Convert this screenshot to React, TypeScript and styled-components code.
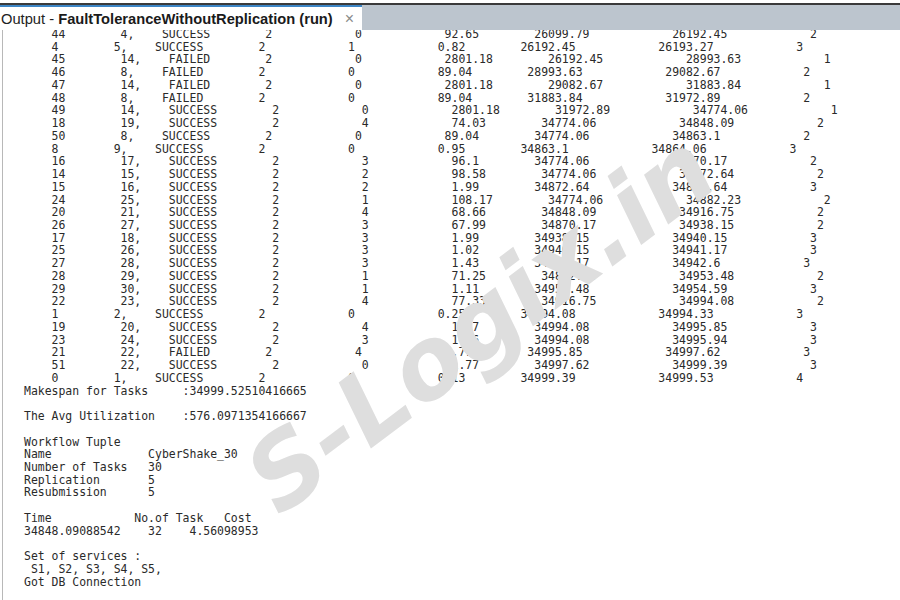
import React from "react";
import styled, { createGlobalStyle } from "styled-components";

const GlobalStyle = createGlobalStyle`
  html, body {
    margin: 0;
    padding: 0;
    background: #ffffff;
  }
`;

// start column of every field after the id, the output is padded by hand
const WIDE = [14, 21, 36, 49, 62];
const MID = [14, 21, 35, 48, 61];
const LOW = [14, 20, 35, 48, 61];
const NARROW = [14, 20, 34, 47, 60];
const SHORT = [13, 19, 34, 47, 60];

type Row = [string, number[], number, string[]];

const rows: Row[] = [
  ["44", LOW, 74, ["4,", "SUCCESS", "2", "0", "92.65", "26099.79", "26192.45", "2"]],
  ["4", SHORT, 72, ["5,", "SUCCESS", "2", "1", "0.82", "26192.45", "26193.27", "3"]],
  ["45", MID, 76, ["14,", "FAILED", "2", "0", "2801.18", "26192.45", "28993.63", "1"]],
  ["46", NARROW, 73, ["8,", "FAILED", "2", "0", "89.04", "28993.63", "29082.67", "2"]],
  ["47", MID, 76, ["14,", "FAILED", "2", "0", "2801.18", "29082.67", "31883.84", "1"]],
  ["48", NARROW, 73, ["8,", "FAILED", "2", "0", "89.04", "31883.84", "31972.89", "2"]],
  ["49", WIDE, 77, ["14,", "SUCCESS", "2", "0", "2801.18", "31972.89", "34774.06", "1"]],
  ["18", WIDE, 75, ["19,", "SUCCESS", "2", "4", "74.03", "34774.06", "34848.09", "2"]],
  ["50", LOW, 74, ["8,", "SUCCESS", "2", "0", "89.04", "34774.06", "34863.1", "2"]],
  ["8", SHORT, 72, ["9,", "SUCCESS", "2", "0", "0.95", "34863.1", "34864.06", "3"]],
  ["16", WIDE, 74, ["17,", "SUCCESS", "2", "3", "96.1", "34774.06", "34870.17", "2"]],
  ["14", WIDE, 75, ["15,", "SUCCESS", "2", "2", "98.58", "34774.06", "34872.64", "2"]],
  ["15", WIDE, 74, ["16,", "SUCCESS", "2", "2", "1.99", "34872.64", "34874.64", "3"]],
  ["24", WIDE, 76, ["25,", "SUCCESS", "2", "1", "108.17", "34774.06", "34882.23", "2"]],
  ["20", WIDE, 75, ["21,", "SUCCESS", "2", "4", "68.66", "34848.09", "34916.75", "2"]],
  ["26", WIDE, 75, ["27,", "SUCCESS", "2", "3", "67.99", "34870.17", "34938.15", "2"]],
  ["17", WIDE, 74, ["18,", "SUCCESS", "2", "3", "1.99", "34938.15", "34940.15", "3"]],
  ["25", WIDE, 74, ["26,", "SUCCESS", "2", "3", "1.02", "34940.15", "34941.17", "3"]],
  ["27", WIDE, 74, ["28,", "SUCCESS", "2", "3", "1.43", "34941.17", "34942.6", "3"]],
  ["28", WIDE, 75, ["29,", "SUCCESS", "2", "1", "71.25", "34882.23", "34953.48", "2"]],
  ["29", WIDE, 74, ["30,", "SUCCESS", "2", "1", "1.11", "34953.48", "34954.59", "3"]],
  ["22", WIDE, 75, ["23,", "SUCCESS", "2", "4", "77.33", "34916.75", "34994.08", "2"]],
  ["1", SHORT, 72, ["2,", "SUCCESS", "2", "0", "0.25", "34994.08", "34994.33", "3"]],
  ["19", WIDE, 74, ["20,", "SUCCESS", "2", "4", "1.77", "34994.08", "34995.85", "3"]],
  ["23", WIDE, 74, ["24,", "SUCCESS", "2", "3", "1.86", "34994.08", "34995.94", "3"]],
  ["21", MID, 73, ["22,", "FAILED", "2", "4", "1.77", "34995.85", "34997.62", "3"]],
  ["51", WIDE, 74, ["22,", "SUCCESS", "2", "0", "1.77", "34997.62", "34999.39", "3"]],
  ["0", SHORT, 72, ["1,", "SUCCESS", "2", "0", "0.13", "34999.39", "34999.53", "4"]],
];

const formatRow = ([id, starts, finishCol, values]: Row) => {
  let line = "    " + id;
  const columns = [...starts, finishCol];
  values.forEach((value, i) => {
    // the last two fields follow the one before with twelve spaces
    const col = i < columns.length ? columns[i] : line.length + 12;
    line = line.padEnd(col, " ") + value;
  });
  return line;
};

const summary = `Makespan for Tasks     :34999.52510416665

The Avg Utilization    :576.0971354166667

Workflow Tuple
Name              CyberShake_30
Number of Tasks   30
Replication       5
Resubmission      5

Time            No.of Task   Cost
34848.09088542    32    4.56098953

Set of services :
 S1, S2, S3, S4, S5,
Got DB Connection`;

const Frame = styled.div`
  position: relative;
  width: 900px;
  height: 600px;
  overflow: hidden;
  display: flex;
  flex-direction: column;
  background: #ffffff;
  padding-top: 3px;
  box-sizing: border-box;
`;

const TabBar = styled.div`
  flex: none;
  height: 27px;
  display: flex;
  background: #bcc5ce;
  border-top: 2px solid #3a3a3a;
  box-sizing: border-box;
`;

const Tab = styled.div`
  width: 362px;
  display: flex;
  align-items: center;
  padding-left: 1px;
  box-sizing: border-box;
  background: #ffffff;
  border-top: 2px solid #3d86c6;
  font-family: "Liberation Sans", Arial, sans-serif;
  font-size: 14.7px;
  color: #222222;
  white-space: pre;
`;

const TabTitle = styled.span`
  font-weight: bold;
  color: #1a1a1a;
`;

const CloseMark = styled.span`
  margin-left: 12px;
  font-size: 16px;
  color: #8a8a8a;
`;

const OutputPane = styled.div`
  flex: 1;
  min-height: 0;
  overflow: hidden;
  margin-left: 2px;
  border-left: 1px solid #b8b8b8;
  padding-left: 21px;
`;

const Console = styled.pre`
  margin: -2px 0 0;
  font-family: "DejaVu Sans Mono", "Liberation Mono", monospace;
  font-size: 11.46px;
  line-height: 12.74px;
  color: #2a2a2a;
`;

const Watermark = styled.div`
  position: absolute;
  left: 480px;
  top: 323px;
  transform: translate(-50%, -50%) rotate(-37deg);
  font-family: "DejaVu Sans", Verdana, sans-serif;
  font-size: 99px;
  font-weight: bold;
  font-style: italic;
  color: #dedede;
  white-space: nowrap;
`;

export default function App() {
  return (
    <>
      <GlobalStyle />
      <Frame>
        <TabBar>
          <Tab>
            Output - <TabTitle>FaultToleranceWithoutReplication (run)</TabTitle>
            <CloseMark>×</CloseMark>
          </Tab>
        </TabBar>
        <OutputPane>
          <Console>{rows.map(formatRow).join("\n") + "\n" + summary}</Console>
        </OutputPane>
        <Watermark>S-Logix.in</Watermark>
      </Frame>
    </>
  );
}
